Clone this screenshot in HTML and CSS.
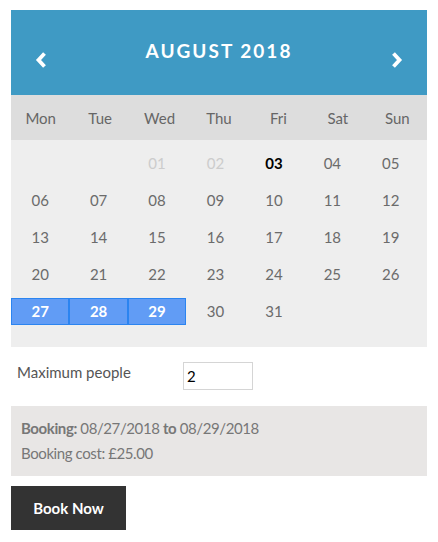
FILE: index.html
```html
<!DOCTYPE html>
<html lang="en">
<head>
  <meta charset="UTF-8">
  <title>Booking</title>
  <link rel="stylesheet" href="styles.css">
</head>
<body>
  <div class="calendar">
    <div class="cal-header">
      <span class="arrow">
        <svg width="12" height="16" viewBox="0 0 12 16"><path d="M9.5 1.5 L3.5 8 L9.5 14.5" fill="none" stroke="#fff" stroke-width="3.8"/></svg>
      </span>
      <div class="month">AUGUST 2018</div>
      <span class="arrow">
        <svg width="12" height="16" viewBox="0 0 12 16"><path d="M2.5 1.5 L8.5 8 L2.5 14.5" fill="none" stroke="#fff" stroke-width="3.8"/></svg>
      </span>
    </div>
    <div class="weekdays">
      <span>Mon</span><span>Tue</span><span>Wed</span><span>Thu</span><span>Fri</span><span>Sat</span><span>Sun</span>
    </div>
    <div class="days">
      <span></span><span></span>
      <span class="past">01</span><span class="past">02</span>
      <span class="today">03</span><span>04</span><span>05</span>
      <span>06</span><span>07</span><span>08</span><span>09</span><span>10</span><span>11</span><span>12</span>
      <span>13</span><span>14</span><span>15</span><span>16</span><span>17</span><span>18</span><span>19</span>
      <span>20</span><span>21</span><span>22</span><span>23</span><span>24</span><span>25</span><span>26</span>
      <span class="selected">27</span><span class="selected">28</span><span class="selected">29</span>
      <span>30</span><span>31</span><span></span><span></span>
    </div>
  </div>

  <div class="people">
    <label for="people">Maximum people</label>
    <input id="people" type="text" value="2">
  </div>

  <div class="summary">
    <p><b>Booking:</b> 08/27/2018 <b>to</b> 08/29/2018</p>
    <p>Booking cost: £25.00</p>
  </div>

  <button class="book">Book Now</button>
</body>
</html>
```

FILE: styles.css
```css
* {
  margin: 0;
  padding: 0;
  box-sizing: border-box;
}

body {
  font-family: Lato, "Open Sans", sans-serif;
  background: #fff;
  padding: 10px 11px;
  width: 438px;
}

.calendar {
  width: 416px;
}

.cal-header {
  background: #3f9ac4;
  height: 85px;
  display: flex;
  justify-content: space-between;
  align-items: flex-start;
  padding: 0 24px;
  color: #fff;
}

.month {
  margin-top: 30px;
  font-size: 19px;
  line-height: 22px;
  font-weight: bold;
  letter-spacing: 2px;
}

.arrow {
  margin-top: 42px;
  width: 12px;
  height: 16px;
}

.weekdays {
  background: #dddddd;
  height: 45px;
  display: grid;
  grid-template-columns: repeat(7, 1fr);
  align-items: center;
  text-align: center;
  font-size: 15px;
  color: #666;
}

.days {
  background: #eeeeee;
  display: grid;
  grid-template-columns: repeat(7, 1fr);
  grid-auto-rows: 27px;
  row-gap: 10px;
  padding: 10px 7px 22px 0;
  text-align: center;
  font-size: 15px;
  color: #6b6b6b;
}

.days span {
  line-height: 27px;
}

.days .past {
  color: #cccccc;
}

.days .today {
  color: #000;
  font-weight: bold;
}

.days .selected {
  background: #619cf5;
  border: 1px solid #2b84f0;
  line-height: 25px;
  color: #fff;
  font-weight: bold;
}

.people {
  display: flex;
  align-items: flex-start;
  margin-top: 15px;
  padding-left: 6px;
}

.people label {
  width: 166px;
  font-size: 15px;
  line-height: 20px;
  color: #555;
}

.people input {
  width: 70px;
  height: 28px;
  border: 1px solid #d5d5d5;
  padding: 0 3px;
  font-family: inherit;
  font-size: 15px;
  color: #000;
}

.summary {
  margin-top: 16px;
  background: #e8e6e5;
  padding: 10px 10px;
  font-size: 15px;
  line-height: 25px;
  letter-spacing: -0.4px;
  color: #777;
}

.book {
  margin-top: 10px;
  width: 115px;
  height: 44px;
  background: #333;
  color: #fff;
  border: none;
  font-family: inherit;
  font-size: 15px;
  font-weight: bold;
}
```
